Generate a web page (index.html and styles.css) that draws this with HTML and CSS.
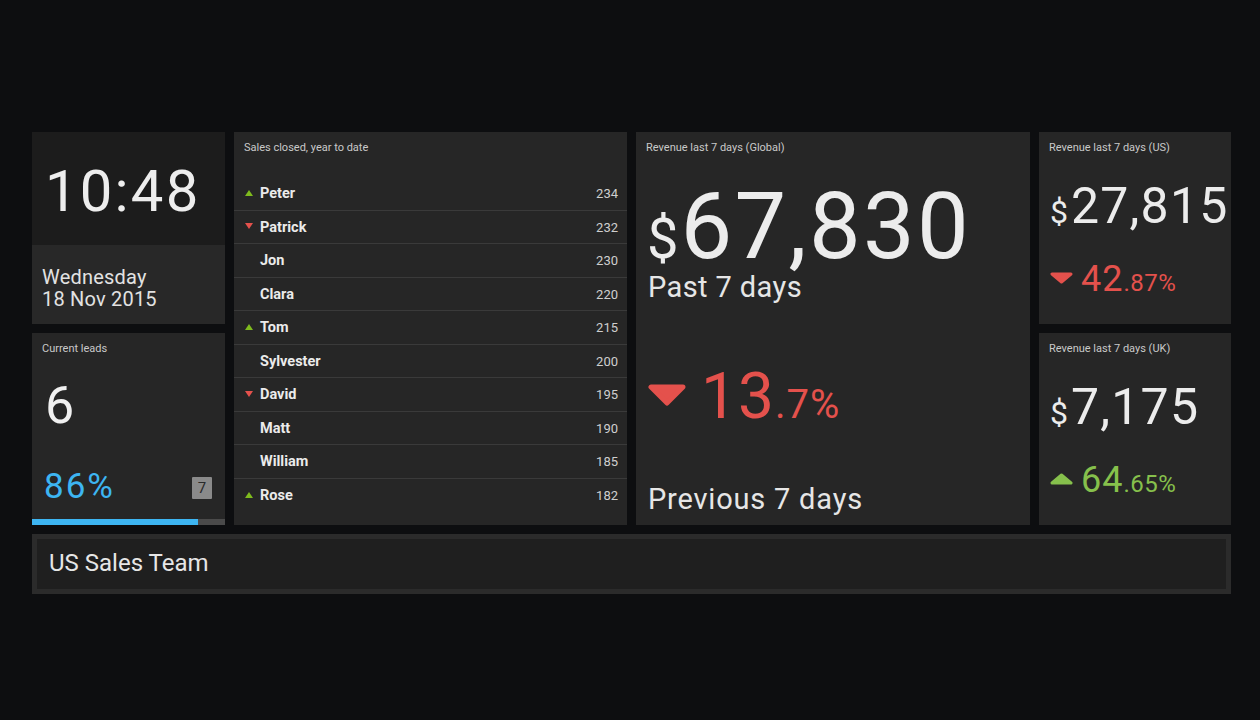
FILE: index.html
```html
<!DOCTYPE html>
<html>
<head>
<meta charset="utf-8">
<link rel="stylesheet" href="styles.css">
</head>
<body>
<div class="board">
  <section class="tile clock">
    <div class="clock-time">10:48</div>
    <div class="clock-date">Wednesday<br>18 Nov 2015</div>
  </section>

  <section class="tile leads">
    <div class="label">Current leads</div>
    <div class="leads-value">6</div>
    <div class="leads-row">
      <span class="leads-pct">86%</span>
      <span class="badge">7</span>
    </div>
    <div class="bar"><div class="bar-fill" style="width:86%"></div></div>
  </section>

  <section class="tile board-list">
    <div class="label">Sales closed, year to date</div>
    <ul class="rows">
      <li class="row"><span class="mark"><svg width="8" height="6" viewBox="0 0 8 6"><polygon points="4,0 8,6 0,6" fill="#7fbb1e"/></svg></span><span class="name">Peter</span><span class="num">234</span></li>
      <li class="row"><span class="mark"><svg width="8" height="6" viewBox="0 0 8 6"><polygon points="0,0 8,0 4,6" fill="#e4514c"/></svg></span><span class="name">Patrick</span><span class="num">232</span></li>
      <li class="row"><span class="mark"></span><span class="name">Jon</span><span class="num">230</span></li>
      <li class="row"><span class="mark"></span><span class="name">Clara</span><span class="num">220</span></li>
      <li class="row"><span class="mark"><svg width="8" height="6" viewBox="0 0 8 6"><polygon points="4,0 8,6 0,6" fill="#7fbb1e"/></svg></span><span class="name">Tom</span><span class="num">215</span></li>
      <li class="row"><span class="mark"></span><span class="name">Sylvester</span><span class="num">200</span></li>
      <li class="row"><span class="mark"><svg width="8" height="6" viewBox="0 0 8 6"><polygon points="0,0 8,0 4,6" fill="#e4514c"/></svg></span><span class="name">David</span><span class="num">195</span></li>
      <li class="row"><span class="mark"></span><span class="name">Matt</span><span class="num">190</span></li>
      <li class="row"><span class="mark"></span><span class="name">William</span><span class="num">185</span></li>
      <li class="row last"><span class="mark"><svg width="8" height="6" viewBox="0 0 8 6"><polygon points="4,0 8,6 0,6" fill="#7fbb1e"/></svg></span><span class="name">Rose</span><span class="num">182</span></li>
    </ul>
  </section>

  <section class="tile global">
    <div class="label">Revenue last 7 days (Global)</div>
    <div class="g-value"><span class="g-cur">$</span>67,830</div>
    <div class="g-sub">Past 7 days</div>
    <div class="g-change down">
      <svg class="g-tri" width="38" height="22" viewBox="0 0 38 22"><polygon points="3,3 35,3 19,19" fill="#e4514c" stroke="#e4514c" stroke-width="5" stroke-linejoin="round"/></svg>
      <span class="g-num">13<span class="g-dec">.7%</span></span>
    </div>
    <div class="g-sub g-prev">Previous 7 days</div>
  </section>

  <section class="tile small us">
    <div class="label">Revenue last 7 days (US)</div>
    <div class="s-value"><span class="s-cur">$</span>27,815</div>
    <div class="s-change down">
      <svg class="s-tri" width="23" height="12" viewBox="0 0 23 12"><polygon points="2,2 21,2 11.5,10" fill="#e4514c" stroke="#e4514c" stroke-width="3" stroke-linejoin="round"/></svg>
      <span class="s-num">42<span class="s-dec">.87%</span></span>
    </div>
  </section>

  <section class="tile small uk">
    <div class="label">Revenue last 7 days (UK)</div>
    <div class="s-value"><span class="s-cur">$</span>7,175</div>
    <div class="s-change up">
      <svg class="s-tri" width="23" height="12" viewBox="0 0 23 12"><polygon points="11.5,2 21,10 2,10" fill="#86c04c" stroke="#86c04c" stroke-width="3" stroke-linejoin="round"/></svg>
      <span class="s-num">64<span class="s-dec">.65%</span></span>
    </div>
  </section>

  <section class="team">
    <div class="team-inner">US Sales Team</div>
  </section>
</div>
</body>
</html>
```

FILE: styles.css
```css
* { box-sizing: border-box; }
html, body {
  margin: 0;
  padding: 0;
  background: #0d0e10;
}
body {
  font-family: Roboto, "Liberation Sans", sans-serif;
  color: #ececec;
  padding: 132px 0 0 32px;
  height: 720px;
  overflow: hidden;
}
.board {
  display: grid;
  grid-template-columns: 193px 393px 394px 192px;
  grid-template-rows: 192px 192px 60px;
  gap: 9px;
  width: 1199px;
}
.tile {
  background: #262626;
  position: relative;
  overflow: hidden;
}
.label {
  font-size: 11px;
  line-height: 14px;
  color: #c9c9c9;
  padding: 9px 10px 0 10px;
}

/* clock */
.clock {
  grid-column: 1;
  grid-row: 1;
  display: flex;
  flex-direction: column;
}
.clock-time {
  height: 113px;
  background: #1c1c1c;
  font-size: 58px;
  line-height: 1;
  letter-spacing: 2.2px;
  padding: 30px 0 0 13px;
  color: #ededed;
}
.clock-date {
  flex: 1;
  background: #282828;
  font-size: 20px;
  line-height: 22px;
  letter-spacing: 0.2px;
  padding: 21px 0 0 10px;
  color: #e2e2e2;
}

/* leads */
.leads {
  grid-column: 1;
  grid-row: 2;
  display: flex;
  flex-direction: column;
}
.leads-value {
  font-size: 52px;
  line-height: 1;
  padding-left: 13px;
  margin-top: 24px;
  color: #f0f0f0;
}
.leads-row {
  display: flex;
  justify-content: space-between;
  align-items: center;
  padding: 0 13px 0 12px;
  margin-top: 37px;
}
.leads-pct {
  font-size: 35px;
  line-height: 1;
  letter-spacing: 2px;
  color: #3db5f2;
}
.badge {
  width: 20px;
  height: 22px;
  background: #8a8a8a;
  color: #2a2a2a;
  font-size: 15px;
  line-height: 22px;
  text-align: center;
  border-radius: 1px;
  margin-top: 3px;
}
.bar {
  margin-top: auto;
  height: 6px;
  background: #4a4a4a;
}
.bar-fill {
  height: 100%;
  background: #3db5f2;
}

/* leaderboard */
.board-list {
  grid-column: 2;
  grid-row: 1 / span 2;
}
.rows {
  list-style: none;
  margin: 22px 0 0 0;
  padding: 0;
}
.row {
  display: flex;
  align-items: center;
  height: 33.5px;
  border-bottom: 1px solid #3a3a3a;
  padding: 1px 9px 0 11px;
}
.row.last { border-bottom: none; }
.mark {
  width: 15px;
  display: flex;
  align-items: center;
  margin-top: -2px;
}
.mark svg { display: block; }
.name {
  flex: 1;
  font-weight: 700;
  font-size: 14.5px;
  color: #ebebeb;
}
.num {
  font-size: 13px;
  color: #cfcfcf;
}

/* global */
.global {
  grid-column: 3;
  grid-row: 1 / span 2;
}
.g-value {
  font-size: 92px;
  line-height: 1;
  margin-top: 26px;
  padding-left: 11px;
  color: #ececec;
  letter-spacing: 2.3px;
}
.g-cur {
  font-size: 56px;
  letter-spacing: 0;
  margin-right: 2px;
}
.g-sub {
  font-size: 29px;
  line-height: 1;
  letter-spacing: 0.4px;
  padding-left: 12px;
  color: #e6e6e6;
}
.g-change {
  display: flex;
  align-items: flex-start;
  padding-left: 12px;
  margin-top: 63px;
  color: #e4514c;
}
.g-tri {
  margin-top: 19px;
  margin-right: 15px;
}
.g-num {
  font-size: 64px;
  line-height: 1;
  letter-spacing: 1px;
}
.g-dec {
  font-size: 40px;
}
.g-prev {
  margin-top: 56px;
  letter-spacing: 0.8px;
}

/* small revenue */
.us { grid-column: 4; grid-row: 1; }
.uk { grid-column: 4; grid-row: 2; }
.s-value {
  font-size: 50px;
  line-height: 1;
  margin-top: 26px;
  padding-left: 11px;
  color: #ececec;
  white-space: nowrap;
  letter-spacing: 1.2px;
}
.s-cur {
  font-size: 32px;
  letter-spacing: 0;
  margin-right: 3px;
}
.s-change {
  display: flex;
  align-items: flex-start;
  padding-left: 11px;
  margin-top: 30px;
}
.s-change.down { color: #e4514c; }
.s-change.up { color: #86c04c; }
.s-tri {
  margin-top: 11px;
  margin-right: 8px;
}
.s-num {
  font-size: 36px;
  line-height: 1;
  letter-spacing: 1px;
}
.s-dec {
  font-size: 24px;
  letter-spacing: 0.5px;
}

/* team */
.team {
  grid-column: 1 / -1;
  grid-row: 3;
  background: #2b2b2b;
  padding: 5px;
}
.team-inner {
  height: 100%;
  background: #1f1f1f;
  font-size: 24px;
  line-height: 24px;
  padding: 12px 0 0 12px;
  color: #e6e6e6;
}
```
